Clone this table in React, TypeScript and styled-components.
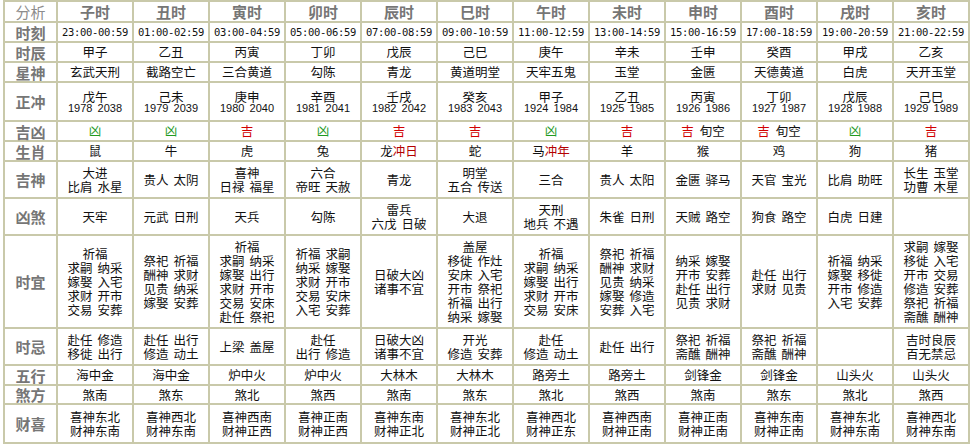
import React from "react";
import styled, { createGlobalStyle } from "styled-components";

const GlobalStyle = createGlobalStyle`
  html, body { margin: 0; padding: 0; background: #ffffff; }
  body { font-family: "Noto Sans CJK SC", "Liberation Sans", sans-serif; }
`;

const CJK = `"Noto Sans CJK SC", "Noto Sans CJK TC", sans-serif`;

type Tone = "good" | "bad" | "clash";

type Hour = {
  name: string;
  time: string;
  gz: string;
  star: string;
  chong: string;
  years: string;
  luck: Tone;
  kong?: boolean;
  zodiac: string;
  clash?: string;
  jishen: string[];
  xiongsha: string[];
  yi: string[];
  ji: string[];
  wuxing: string;
  sha: string;
  cai: string[];
};

const HOURS: Hour[] = [
  { name: "子时", time: "23:00-00:59", gz: "甲子", star: "玄武天刑", chong: "戊午", years: "1978 2038", luck: "bad", zodiac: "鼠", jishen: ["大进", "比肩 水星"], xiongsha: ["天牢"], yi: ["祈福", "求嗣 纳采", "嫁娶 入宅", "求财 开市", "交易 安葬"], ji: ["赴任 修造", "移徙 出行"], wuxing: "海中金", sha: "煞南", cai: ["喜神东北", "财神东南"] },
  { name: "丑时", time: "01:00-02:59", gz: "乙丑", star: "截路空亡", chong: "己未", years: "1979 2039", luck: "bad", zodiac: "牛", jishen: ["贵人 太阴"], xiongsha: ["元武 日刑"], yi: ["祭祀 祈福", "酬神 求财", "见贵 纳采", "嫁娶 安葬"], ji: ["赴任 出行", "修造 动土"], wuxing: "海中金", sha: "煞东", cai: ["喜神西北", "财神东南"] },
  { name: "寅时", time: "03:00-04:59", gz: "丙寅", star: "三合黄道", chong: "庚申", years: "1980 2040", luck: "good", zodiac: "虎", jishen: ["喜神", "日禄 福星"], xiongsha: ["天兵"], yi: ["祈福", "求嗣 纳采", "嫁娶 出行", "求财 开市", "交易 安床", "赴任 祭祀"], ji: ["上梁 盖屋"], wuxing: "炉中火", sha: "煞北", cai: ["喜神西南", "财神正西"] },
  { name: "卯时", time: "05:00-06:59", gz: "丁卯", star: "勾陈", chong: "辛酉", years: "1981 2041", luck: "bad", zodiac: "兔", jishen: ["六合", "帝旺 天赦"], xiongsha: ["勾陈"], yi: ["祈福 求嗣", "纳采 嫁娶", "求财 开市", "交易 安床", "入宅 安葬"], ji: ["赴任", "出行 修造"], wuxing: "炉中火", sha: "煞西", cai: ["喜神正南", "财神正西"] },
  { name: "辰时", time: "07:00-08:59", gz: "戊辰", star: "青龙", chong: "壬戌", years: "1982 2042", luck: "good", zodiac: "龙", clash: "冲日", jishen: ["青龙"], xiongsha: ["雷兵", "六戊 日破"], yi: ["日破大凶", "诸事不宜"], ji: ["日破大凶", "诸事不宜"], wuxing: "大林木", sha: "煞南", cai: ["喜神东南", "财神正北"] },
  { name: "巳时", time: "09:00-10:59", gz: "己巳", star: "黄道明堂", chong: "癸亥", years: "1983 2043", luck: "good", zodiac: "蛇", jishen: ["明堂", "五合 传送"], xiongsha: ["大退"], yi: ["盖屋", "移徙 作灶", "安床 入宅", "开市 祭祀", "祈福 出行", "纳采 嫁娶"], ji: ["开光", "修造 安葬"], wuxing: "大林木", sha: "煞东", cai: ["喜神东北", "财神正北"] },
  { name: "午时", time: "11:00-12:59", gz: "庚午", star: "天牢五鬼", chong: "甲子", years: "1924 1984", luck: "bad", zodiac: "马", clash: "冲年", jishen: ["三合"], xiongsha: ["天刑", "地兵 不遇"], yi: ["祈福", "求嗣 纳采", "嫁娶 出行", "求财 开市", "交易 安床"], ji: ["赴任", "修造 动土"], wuxing: "路旁土", sha: "煞北", cai: ["喜神西北", "财神正东"] },
  { name: "未时", time: "13:00-14:59", gz: "辛未", star: "玉堂", chong: "乙丑", years: "1925 1985", luck: "good", zodiac: "羊", jishen: ["贵人 太阳"], xiongsha: ["朱雀 日刑"], yi: ["祭祀 祈福", "酬神 求财", "见贵 纳采", "嫁娶 修造", "安葬 入宅"], ji: ["赴任 出行"], wuxing: "路旁土", sha: "煞西", cai: ["喜神西南", "财神正南"] },
  { name: "申时", time: "15:00-16:59", gz: "壬申", star: "金匮", chong: "丙寅", years: "1926 1986", luck: "good", kong: true, zodiac: "猴", jishen: ["金匮 驿马"], xiongsha: ["天贼 路空"], yi: ["纳采 嫁娶", "开市 安葬", "赴任 出行", "见贵 求财"], ji: ["祭祀 祈福", "斋醮 酬神"], wuxing: "剑锋金", sha: "煞南", cai: ["喜神正南", "财神正南"] },
  { name: "酉时", time: "17:00-18:59", gz: "癸酉", star: "天德黄道", chong: "丁卯", years: "1927 1987", luck: "good", kong: true, zodiac: "鸡", jishen: ["天官 宝光"], xiongsha: ["狗食 路空"], yi: ["赴任 出行", "求财 见贵"], ji: ["祭祀 祈福", "斋醮 酬神"], wuxing: "剑锋金", sha: "煞东", cai: ["喜神东南", "财神正南"] },
  { name: "戌时", time: "19:00-20:59", gz: "甲戌", star: "白虎", chong: "戊辰", years: "1928 1988", luck: "bad", zodiac: "狗", jishen: ["比肩 助旺"], xiongsha: ["白虎 日建"], yi: ["祈福 纳采", "嫁娶 移徙", "开市 修造", "入宅 安葬"], ji: [], wuxing: "山头火", sha: "煞北", cai: ["喜神东北", "财神东南"] },
  { name: "亥时", time: "21:00-22:59", gz: "乙亥", star: "天开玉堂", chong: "己巳", years: "1929 1989", luck: "good", zodiac: "猪", jishen: ["长生 玉堂", "功曹 木星"], xiongsha: [], yi: ["求嗣 嫁娶", "移徙 入宅", "开市 交易", "修造 安葬", "祭祀 祈福", "斋醮 酬神"], ji: ["吉时良辰", "百无禁忌"], wuxing: "山头火", sha: "煞西", cai: ["喜神西北", "财神东南"] },
];

const ROW_HEIGHTS = [19, 18, 18, 18, 37, 18, 18, 35, 35, 91, 35, 18, 17, 37];

const Board = styled.div`
  display: grid;
  grid-template-columns: 51px repeat(12, 74px);
  grid-template-rows: ${ROW_HEIGHTS.map((h) => `${h}px`).join(" ")};
  gap: 2px;
  padding: 2px;
  margin-left: 3px;
  width: max-content;
  background: #c9c9aa;
`;

const Cell = styled.div`
  background: #ffffff;
  display: flex;
  flex-direction: column;
  align-items: center;
  justify-content: center;
  text-align: center;
  font-family: ${CJK};
  font-size: 12.5px;
  line-height: 14px;
  color: #111111;
  white-space: nowrap;
  word-spacing: 2px;
`;

const HeadCell = styled(Cell)<{ $plain?: boolean }>`
  font-size: 15px;
  line-height: 17px;
  font-weight: ${(p) => (p.$plain ? 400 : 700)};
  color: ${(p) => (p.$plain ? "#8c8c8c" : "#767676")};
  word-spacing: 0;
`;

const Line = styled.span`
  display: block;
`;

const Time = styled.span`
  font-family: "DejaVu Sans Mono", "Liberation Mono", monospace;
  font-size: 10.5px;
  letter-spacing: -0.3px;
  word-spacing: 0;
  color: #111111;
`;

const ChongName = styled.span`
  display: block;
  line-height: 13px;
`;

const Years = styled.span`
  display: block;
  font-family: "Liberation Sans", Arial, sans-serif;
  font-size: 11px;
  line-height: 11px;
  word-spacing: 2px;
`;

const Mark = styled.span<{ $tone: Tone }>`
  color: ${(p) =>
    p.$tone === "good" ? "#d10000" : p.$tone === "bad" ? "#1f9a1f" : "#b40000"};
`;

const Gap = styled.span`
  display: inline-block;
  width: 6px;
`;

const Lines = ({ items }: { items: string[] }) => (
  <>
    {items.map((t, i) => (
      <Line key={i}>{t}</Line>
    ))}
  </>
);

type RowDef = { label: string; render: (h: Hour) => React.ReactNode };

const ROWS: RowDef[] = [
  { label: "时刻", render: (h) => <Time>{h.time}</Time> },
  { label: "时辰", render: (h) => h.gz },
  { label: "星神", render: (h) => h.star },
  {
    label: "正冲",
    render: (h) => (
      <>
        <ChongName>{h.chong}</ChongName>
        <Years>{h.years}</Years>
      </>
    ),
  },
  {
    label: "吉凶",
    render: (h) => (
      <Line>
        <Mark $tone={h.luck}>{h.luck === "good" ? "吉" : "凶"}</Mark>
        {h.kong && (
          <>
            <Gap />
            旬空
          </>
        )}
      </Line>
    ),
  },
  {
    label: "生肖",
    render: (h) => (
      <Line>
        {h.zodiac}
        {h.clash && <Mark $tone="clash">{h.clash}</Mark>}
      </Line>
    ),
  },
  { label: "吉神", render: (h) => <Lines items={h.jishen} /> },
  { label: "凶煞", render: (h) => <Lines items={h.xiongsha} /> },
  { label: "时宜", render: (h) => <Lines items={h.yi} /> },
  { label: "时忌", render: (h) => <Lines items={h.ji} /> },
  { label: "五行", render: (h) => h.wuxing },
  { label: "煞方", render: (h) => h.sha },
  { label: "财喜", render: (h) => <Lines items={h.cai} /> },
];

export default function App() {
  return (
    <>
      <GlobalStyle />
      <Board>
        <HeadCell $plain>分析</HeadCell>
        {HOURS.map((h) => (
          <HeadCell key={h.name}>{h.name}</HeadCell>
        ))}
        {ROWS.map((row) => (
          <React.Fragment key={row.label}>
            <HeadCell>{row.label}</HeadCell>
            {HOURS.map((h) => (
              <Cell key={h.name}>{row.render(h)}</Cell>
            ))}
          </React.Fragment>
        ))}
      </Board>
    </>
  );
}
